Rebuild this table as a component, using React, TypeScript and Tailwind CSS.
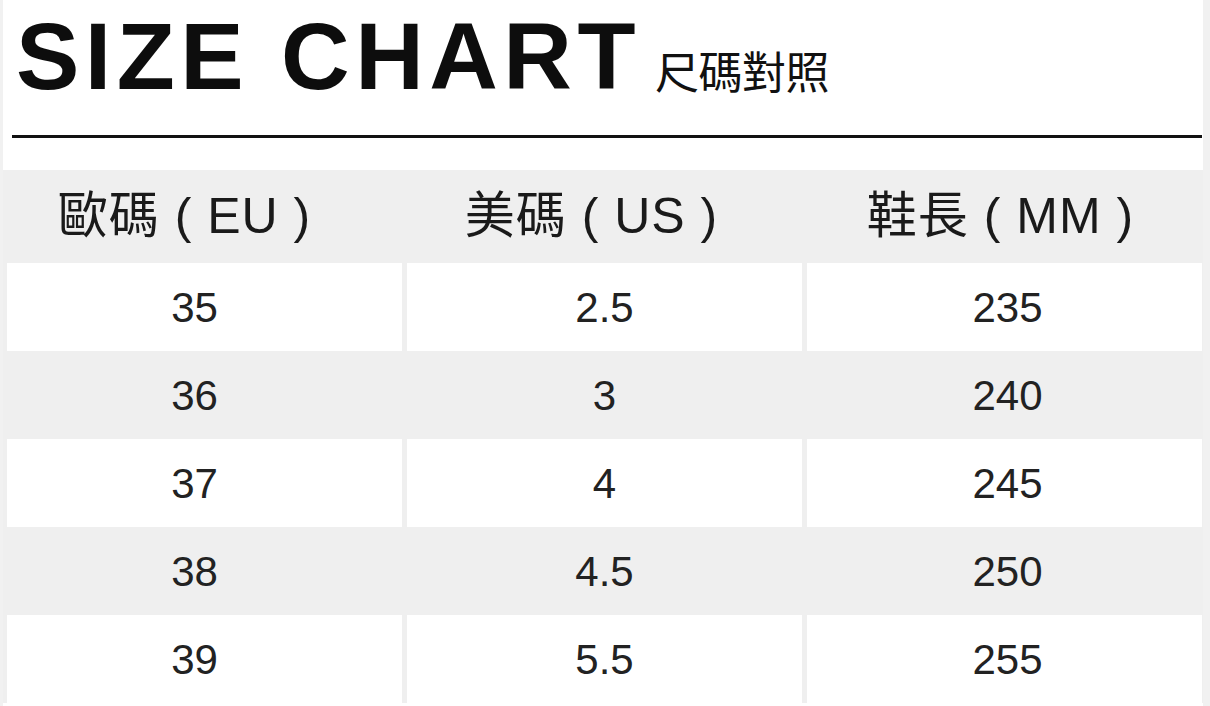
const headers = [
  { label: '歐碼 ( EU )', pad: 'pr-[40px]' },
  { label: '美碼 ( US )', pad: 'pr-[26px]' },
  { label: '鞋長 ( MM )', pad: 'pr-[8px]' },
]

const rows = [
  ['35', '2.5', '235'],
  ['36', '3', '240'],
  ['37', '4', '245'],
  ['38', '4.5', '250'],
  ['39', '5.5', '255'],
]

export default function App() {
  return (
    <div className="w-[1210px] h-[706px] overflow-hidden bg-[#f1f1f1] font-['Liberation_Sans','Noto_Sans_CJK_TC',sans-serif]">
      <div className="ml-[3px] w-[1200px] h-full bg-white">
        <div className="h-[170px] flex flex-col">
          <div className="flex items-baseline pl-[13px] pt-[9px]">
            <h1 className="text-[95px] leading-none font-bold tracking-[5.5px] text-[#0d0d0d]">
              SIZE CHART
            </h1>
            <span className="ml-[14px] text-[44px] leading-none text-[#111] font-['Noto_Sans_CJK_TC',sans-serif] tracking-[-0.5px]">
              尺碼對照
            </span>
          </div>
          <div className="mt-auto mb-[32px] ml-[9px] h-[3px] w-[1190px] bg-[#111]" />
        </div>

        <div className="bg-[#efefef] pl-[4px] pr-[1px]">
          <div className="grid grid-cols-3 gap-x-[5px] h-[93px]">
            {headers.map((h) => (
              <div
                key={h.label}
                className={`flex items-center justify-center text-[50px] text-[#1a1a1a] whitespace-pre tracking-[1px] ${h.pad}`}
              >
                {h.label}
              </div>
            ))}
          </div>
          {rows.map((row, i) => (
            <div key={row[0]} className="grid grid-cols-3 gap-x-[5px] h-[88px]">
              {row.map((cell, j) => (
                <div
                  key={j}
                  className={[
                    'flex items-center justify-center text-[42px] text-[#222]',
                    i % 2 === 0 ? 'bg-white' : '',
                    j === 0 ? 'pr-[20px]' : j === 2 ? 'pl-[6px]' : '',
                  ].join(' ')}
                >
                  {cell}
                </div>
              ))}
            </div>
          ))}
        </div>
      </div>
    </div>
  )
}
